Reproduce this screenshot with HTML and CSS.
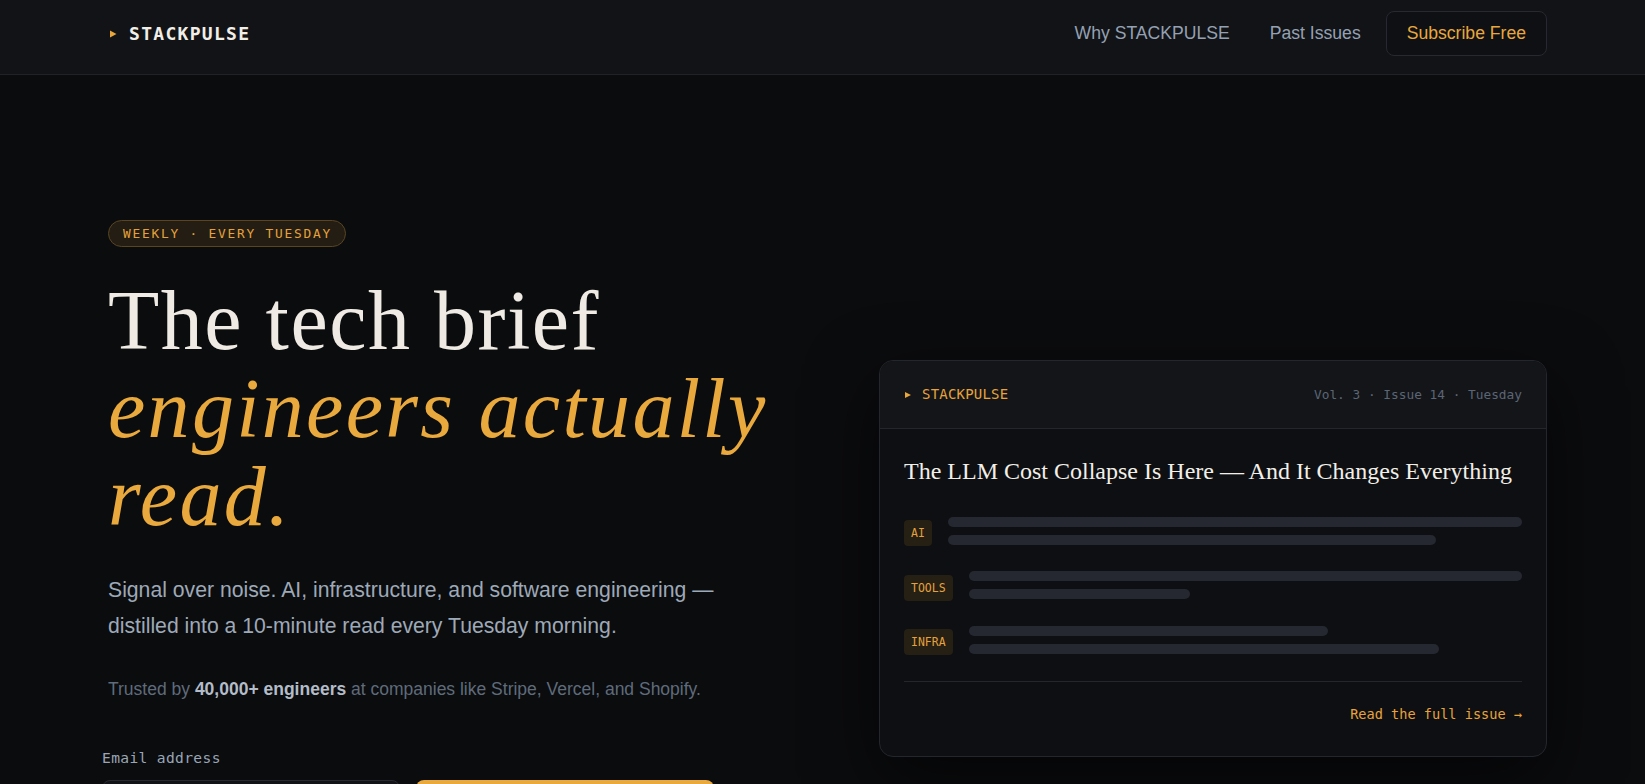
FILE: index.html
```html
<!DOCTYPE html>
<html lang="en">
<head>
<meta charset="utf-8">
<title>STACKPULSE — The tech brief engineers actually read</title>
<link rel="stylesheet" href="styles.css">
</head>
<body>
<nav class="site-nav">
  <div class="nav-inner">
    <a class="brand" href="#">
      <svg class="brand-mark" width="7" height="8" viewBox="0 0 7 8" aria-hidden="true"><path d="M0 0.5L6.5 4L0 7.5Z" fill="#e9a63a"/></svg>
      <span>STACKPULSE</span>
    </a>
    <div class="nav-right">
      <ul class="nav-links">
        <li><a href="#">Why STACKPULSE</a></li>
        <li><a href="#">Past Issues</a></li>
      </ul>
      <a class="nav-cta" href="#">Subscribe Free</a>
    </div>
  </div>
</nav>

<main class="hero">
  <section class="hero-copy">
    <span class="badge">WEEKLY · EVERY TUESDAY</span>
    <h1 class="headline">The tech brief <em>engineers actually read.</em></h1>
    <p class="lede">Signal over noise. AI, infrastructure, and software engineering — distilled into a 10-minute read every Tuesday morning.</p>
    <p class="trust">Trusted by <strong>40,000+ engineers</strong> at companies like Stripe, Vercel, and Shopify.</p>
    <form class="signup">
      <label class="signup-label" for="email">Email address</label>
      <div class="signup-row">
        <input class="signup-input" id="email" type="email" placeholder="you@company.com">
        <button class="signup-btn" type="button">Subscribe Free →</button>
      </div>
    </form>
  </section>

  <aside class="issue-card">
    <header class="issue-head">
      <span class="issue-brand">
        <svg width="6" height="6" viewBox="0 0 6 6" aria-hidden="true"><path d="M0 0L6 3L0 6Z" fill="#e9a63a"/></svg>
        <span>STACKPULSE</span>
      </span>
      <span class="issue-meta">Vol. 3 · Issue 14 · Tuesday</span>
    </header>
    <div class="issue-body">
      <h2 class="issue-title">The LLM Cost Collapse Is Here — And It Changes Everything</h2>
      <ul class="issue-rows">
        <li class="issue-row">
          <span class="tag">AI</span>
          <div class="bars">
            <span class="bar" style="width:100%"></span>
            <span class="bar" style="width:85%"></span>
          </div>
        </li>
        <li class="issue-row">
          <span class="tag">TOOLS</span>
          <div class="bars">
            <span class="bar" style="width:100%"></span>
            <span class="bar" style="width:40%"></span>
          </div>
        </li>
        <li class="issue-row">
          <span class="tag">INFRA</span>
          <div class="bars">
            <span class="bar" style="width:65%"></span>
            <span class="bar" style="width:85%"></span>
          </div>
        </li>
      </ul>
      <div class="issue-foot">
        <a class="issue-link" href="#">Read the full issue →</a>
      </div>
    </div>
  </aside>
</main>
</body>
</html>
```

FILE: styles.css
```css
* {
  box-sizing: border-box;
  margin: 0;
  padding: 0;
}

html,
body {
  background: #0b0c0e;
}

body {
  font-family: "Liberation Sans", Arial, sans-serif;
  color: #eeebe4;
  overflow: hidden;
}

a {
  text-decoration: none;
}

/* ---------- Nav ---------- */
.site-nav {
  background: #111317;
  border-bottom: 1px solid #1f2227;
}

.nav-inner {
  display: flex;
  align-items: center;
  justify-content: space-between;
  padding: 11px 98px 18px 108px;
}

.brand {
  display: flex;
  align-items: center;
  gap: 12px;
  margin-left: 2px;
  font-family: "DejaVu Sans Mono", monospace;
  font-weight: 700;
  font-size: 18px;
  letter-spacing: 1.3px;
  color: #f1eee8;
}

.nav-right {
  display: flex;
  align-items: center;
  gap: 25px;
}

.nav-links {
  display: flex;
  gap: 40px;
  list-style: none;
}

.nav-links a {
  font-size: 17.6px;
  color: #95a1b2;
}

.nav-cta {
  font-size: 17.6px;
  line-height: 21px;
  padding: 11px 20px;
  color: #e9a83c;
  background: #0e1013;
  border: 1px solid #262930;
  border-radius: 8px;
}

/* ---------- Hero ---------- */
.hero {
  display: grid;
  grid-template-columns: 1fr 668px;
  column-gap: 64px;
  align-items: start;
  padding: 145px 98px 0 108px;
}

.hero-copy {
  display: flex;
  flex-direction: column;
  align-items: flex-start;
}

.badge {
  font-family: "DejaVu Sans Mono", monospace;
  font-size: 12.8px;
  line-height: 15px;
  letter-spacing: 1.8px;
  padding: 5px 13px 5px 14px;
  color: #e6a23a;
  background: #231d13;
  border: 1px solid #5a4521;
  border-radius: 999px;
}

.headline {
  margin-top: 30px;
  font-family: "Liberation Serif", "Times New Roman", serif;
  font-weight: 400;
  font-size: 84px;
  line-height: 88px;
  letter-spacing: 1.5px;
  color: #efebe4;
}

.headline em {
  font-style: italic;
  letter-spacing: 2.3px;
  color: #e9a93d;
}

.lede {
  margin-top: 31px;
  max-width: 640px;
  font-size: 21.2px;
  line-height: 36px;
  color: #9ea9b8;
}

.trust {
  margin-top: 32px;
  font-size: 17.5px;
  line-height: 1.5;
  color: #5f6b7b;
}

.trust strong {
  color: #b3bcc8;
  font-weight: 700;
}

.signup {
  margin-top: 47px;
  margin-left: -6px;
  width: 612px;
}

.signup-label {
  display: block;
  font-family: "DejaVu Sans Mono", monospace;
  font-size: 14.6px;
  line-height: 18px;
  letter-spacing: 0.35px;
  color: #9aa6b6;
}

.signup-row {
  display: grid;
  grid-template-columns: 1fr 1fr;
  gap: 16px;
  margin-top: 13px;
}

.signup-input {
  height: 52px;
  padding: 0 16px;
  font-family: "Liberation Sans", Arial, sans-serif;
  font-size: 17px;
  color: #e9e6df;
  background: #111317;
  border: 1px solid #272a31;
  border-radius: 8px;
}

.signup-btn {
  height: 52px;
  font-family: "Liberation Sans", Arial, sans-serif;
  font-size: 17px;
  font-weight: 700;
  color: #14110b;
  background: #e9a93d;
  border: none;
  border-radius: 8px;
}

/* ---------- Issue card ---------- */
.issue-card {
  margin-top: 140px;
  background: #0e0f12;
  border: 1px solid #23262d;
  border-radius: 14px;
  overflow: hidden;
  box-shadow: 0 24px 70px rgba(0, 0, 0, 0.6);
}

.issue-head {
  display: flex;
  align-items: center;
  justify-content: space-between;
  padding: 24px;
  line-height: 19px;
  font-family: "DejaVu Sans Mono", monospace;
  background: #131519;
  border-bottom: 1px solid #23262d;
}

.issue-brand {
  display: flex;
  align-items: center;
  gap: 11px;
  margin-left: 1px;
  font-size: 14px;
  letter-spacing: 0.2px;
  color: #e8a33a;
}

.issue-meta {
  font-size: 12.8px;
  color: #5b6574;
}

.issue-body {
  padding: 26px 24px 32px;
}

.issue-title {
  font-family: "Liberation Serif", "Times New Roman", serif;
  font-weight: 400;
  font-size: 24px;
  line-height: 1.4;
  color: #f2efe9;
  margin-bottom: 28px;
}

.issue-rows {
  display: flex;
  flex-direction: column;
  gap: 25px;
  list-style: none;
}

.issue-row {
  display: flex;
  align-items: flex-start;
  gap: 16px;
}

.tag {
  flex-shrink: 0;
  margin-top: 3.5px;
  padding: 5px 7px;
  font-family: "DejaVu Sans Mono", monospace;
  font-size: 11.5px;
  line-height: 16px;
  color: #e4a23c;
  background: #261f14;
  border-radius: 4px;
}

.bars {
  flex: 1;
  display: flex;
  flex-direction: column;
  gap: 8px;
}

.bar {
  display: block;
  height: 10px;
  border-radius: 5px;
  background: #252831;
}

.issue-foot {
  margin-top: 26px;
  padding-top: 22px;
  border-top: 1px solid #23262d;
  text-align: right;
}

.issue-link {
  font-family: "DejaVu Sans Mono", monospace;
  font-size: 13.6px;
  line-height: 20px;
  color: #e8a33a;
}
```
